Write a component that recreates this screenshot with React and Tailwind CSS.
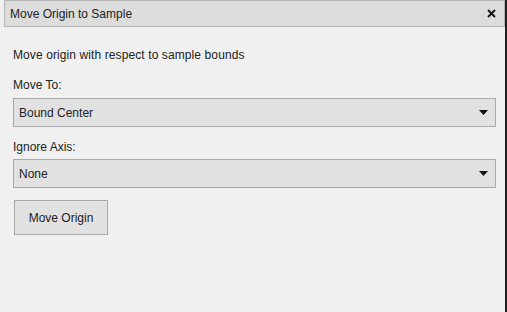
import React from 'react'

function Select({ value }) {
  return (
    <div className="flex items-center justify-between h-[29px] border border-[#a9a9a9] bg-[#e1e1e1] pl-[5px] pr-[7px] text-[12px] text-[#222]">
      <span>{value}</span>
      <svg width="9" height="5" viewBox="0 0 9 5">
        <path d="M0 0h9L4.5 5z" fill="#111" />
      </svg>
    </div>
  )
}

export default function App() {
  return (
    <div className="flex w-[507px] h-[312px] bg-[#1e1e1e] overflow-hidden" style={{ fontFamily: '"Liberation Sans", Arial, sans-serif' }}>
      <div className="flex flex-col w-[505px] h-full bg-[#f0f0f0]">
        {/* title bar */}
        <div className="flex items-center justify-between h-[27px] ml-[4px] border border-[#b4b4b4] bg-[#dcdcdc] pl-[5px] pr-[8px] text-[12px] text-[#222]">
          <span>Move Origin to Sample</span>
          <svg width="9" height="9" viewBox="0 0 9 9">
            <path d="M1 1l7 7M8 1L1 8" stroke="#111" strokeWidth="1.8" />
          </svg>
        </div>

        <div className="flex flex-col px-[13px] pr-[9px] text-[12px] text-[#222]">
          <p className="mt-[21px] leading-[14px] tracking-[0.1px]">Move origin with respect to sample bounds</p>

          <p className="mt-[16px] leading-[14px]">Move To:</p>
          <div className="mt-[6px]">
            <Select value="Bound Center" />
          </div>

          <p className="mt-[13px] leading-[14px]">Ignore Axis:</p>
          <div className="mt-[5px]">
            <Select value="None" />
          </div>

          <button className="mt-[12px] ml-[1px] w-[94px] h-[35px] border border-[#a9a9a9] bg-[#e1e1e1] text-[12px] text-[#222]">
            Move Origin
          </button>
        </div>
      </div>
    </div>
  )
}
